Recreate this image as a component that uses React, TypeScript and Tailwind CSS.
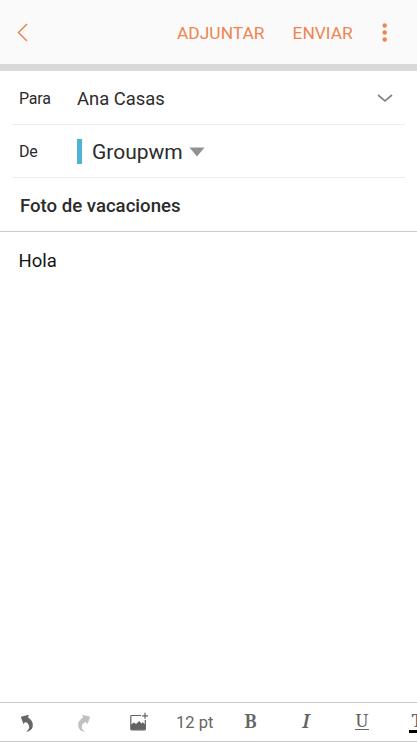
import type { ReactNode } from "react";

function UndoIcon({ className }: { className: string }) {
  return (
    <svg viewBox="0 0 14 18" className={className} fill="currentColor">
      <path d="M.8 2.800 8.700.8 8.100 3.500C11.500 5.500 13.300 8.500 12.800 12.200c-.5 3.200-2.900 5.200-6.800 5.500 2.900-1.700 3.800-3.900 2.900-6.200C8.200 9.500 7.200 8.500 5.300 8L3.400 10z" />
    </svg>
  );
}

function AddImageIcon() {
  return (
    <svg viewBox="0 0 20 20" className="h-5 w-5 shrink-0 text-[#636363]" fill="none">
      <path d="M12 3.500H2.600a.8.8 0 0 0-.8.8V17a.8.8 0 0 0 .8.800H15.500a.8.8 0 0 0 .8-.8V8" stroke="currentColor" strokeWidth="1.200" />
      <path d="M2 12.500 5 10.500 7 12 10.300 9 12.300 11.500 13.800 10.300 16.200 12.500V17.800H2z" fill="currentColor" />
      <path d="M16 .8v6M13 3.800h6" stroke="currentColor" strokeWidth="1.200" />
    </svg>
  );
}

function Field({ label, children }: { label: string; children: ReactNode }) {
  return (
    <div className="mx-3 flex items-center border-b border-[#ececec] pl-[7px]">
      <span className="w-[58px] shrink-0 pt-0.5 text-[16px] tracking-[-0.2px]">{label}</span>
      {children}
    </div>
  );
}

export default function App() {
  return (
    <div className="flex h-[742px] w-full flex-col overflow-hidden bg-white font-['Roboto',sans-serif] text-[#2b2b2b]">
      <header className="flex h-[71px] shrink-0 items-center border-b-[7px] border-[#d9d9d9] bg-[#fafafa] pt-px pl-[17px] text-[17.400px] text-[#f08450]">
        <button aria-label="Atrás">
          <svg viewBox="0 0 12 20" className="h-5 w-3" fill="none" stroke="currentColor" strokeWidth="1.500">
            <path d="M10 1 1.500 9.500 10 18" />
          </svg>
        </button>
        <button className="ml-[148px] w-[88px] whitespace-nowrap pt-0.5 text-left">ADJUNTAR</button>
        <button className="ml-[27.500px] w-[60px] whitespace-nowrap pt-0.5 text-left">ENVIAR</button>
        <button aria-label="Más opciones" className="ml-[29.500px]">
          <svg viewBox="0 0 6 20" className="h-5 w-1.5" fill="currentColor">
            <circle cx="2.700" cy="2.500" r="2.200" />
            <circle cx="2.700" cy="9.500" r="2.200" />
            <circle cx="2.700" cy="16.500" r="2.200" />
          </svg>
        </button>
      </header>

      <div className="grid h-[107px] shrink-0 grid-rows-[54px_53px]">
        <Field label="Para">
          <span className="pt-0.5 text-[18.400px]">Ana Casas</span>
          <svg viewBox="0 0 16 10" className="mr-3 ml-auto h-2.5 w-4" fill="none" stroke="#858585" strokeWidth="1.700">
            <path d="M1 2 8 8 15 2" />
          </svg>
        </Field>
        <Field label="De">
          <span className="mr-[10px] h-[25px] w-[5px] bg-[#4eb3d6]" />
          <span className="pt-[3px] text-[21px]">Groupwm</span>
          <svg viewBox="0 0 16 10" className="mt-0.5 ml-1.5 h-2.5 w-4" fill="#919191">
            <path d="M.5.500h15L8 9.500z" />
          </svg>
        </Field>
      </div>

      <div className="flex h-[54px] shrink-0 items-center border-b border-[#cbcbcb] pt-1 pl-5 text-[18.600px] font-medium">
        Foto de vacaciones
      </div>

      <div className="flex-1 pt-4 pl-[18.500px] text-[18.500px] text-[#151515]">Hola</div>

      <footer className="flex h-10 shrink-0 items-center overflow-hidden border-y border-[#c8c8c8] pl-5 text-[#656565]">
        <UndoIcon className="mt-0.5 h-[18px] w-3.5 shrink-0 text-[#666]" />
        <UndoIcon className="mt-0.5 ml-[43px] h-[18px] w-3.5 shrink-0 -scale-x-100 text-[#c0c0c0]" />
        <span className="ml-[38px] flex">
          <AddImageIcon />
        </span>
        <span className="ml-[27px] w-[38px] shrink-0 whitespace-nowrap pt-[3px] text-[16.500px]">12 pt</span>
        <div className="ml-[9px] flex shrink-0 font-['Noto_Serif','Liberation_Serif',serif] text-[18px] leading-5">
          <span className="w-[55px] text-center text-[19px] font-semibold">B</span>
          <span className="w-[56px] text-center text-[19px] font-semibold italic">I</span>
          <span className="flex w-[56px] justify-center">
            <span className="flex h-[19px] w-3.5 justify-center border-b border-[#656565] leading-[19px]">U</span>
          </span>
          <span className="ml-[19px] flex h-[22px] w-4 justify-center border-b-[3px] border-black leading-[18px]">T</span>
        </div>
      </footer>
    </div>
  );
}
